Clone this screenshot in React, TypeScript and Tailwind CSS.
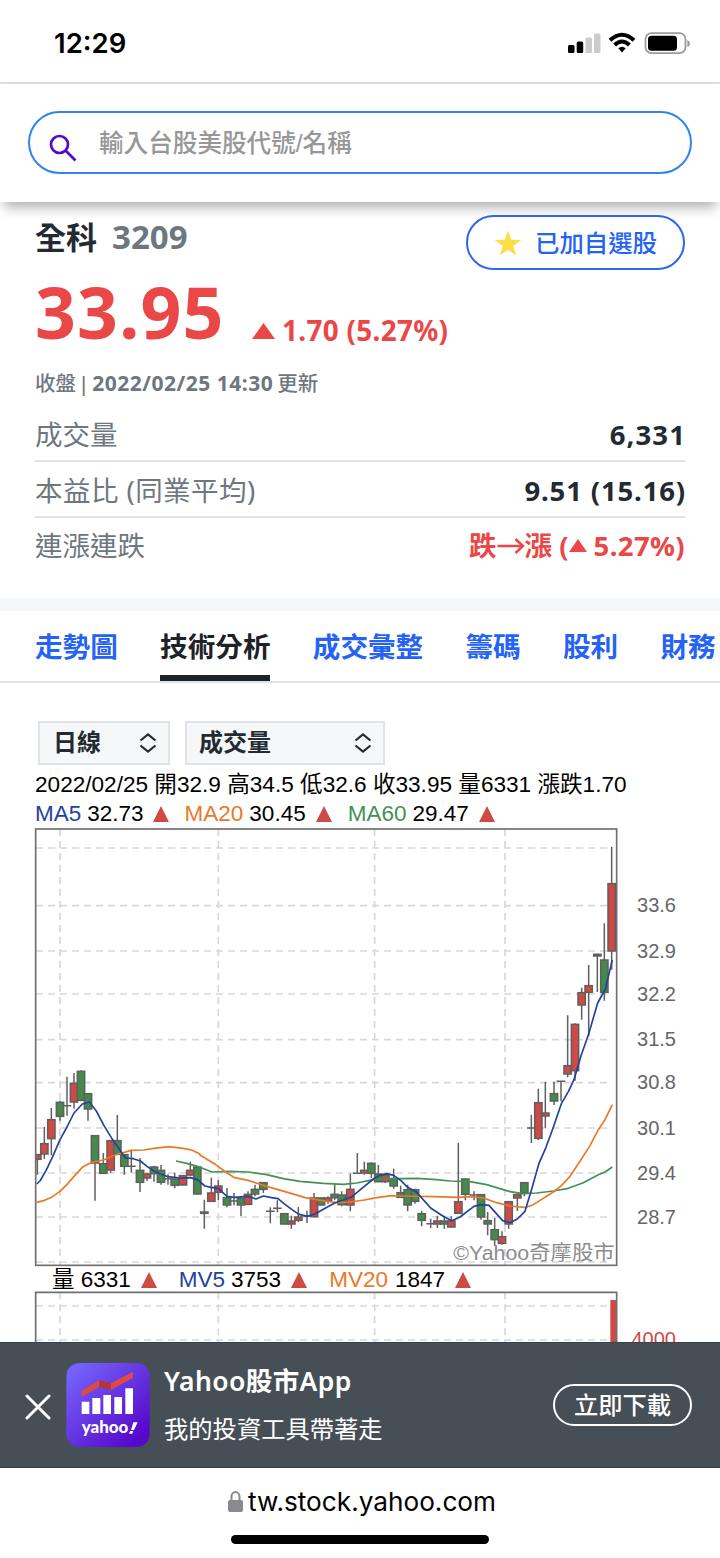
import type { ReactNode } from "react";

type Kind = "up" | "down" | "flat";
// x, high, low, body top, body bottom, kind
type Candle = [number, number, number, number, number, Kind];
type Point = [number, number];

// The chart is drawn at three units to the pixel.
const shiftCandles = (dx: number, dy: number, list: Candle[]): Candle[] =>
  list.map(([x, h, l, t, b, k]) => [x + dx, h + dy, l + dy, t + dy, b + dy, k]);
const shiftPoints = (dx: number, dy: number, list: Point[]): Point[] =>
  list.map(([x, y]) => [x + dx, y + dy]);

const candles: Candle[] = [
  ...shiftCandles(60, 660, [
    [52, 343, 405, 344, 359, "up"],
    [73, 262, 357, 311, 343, "up"],
    [94, 205, 347, 239, 297, "up"],
    [120, 183, 243, 187, 230, "down"],
    [141, 111, 228, 198, 198, "flat"],
    [162, 100, 207, 130, 187, "up"],
    [183, 92, 185, 94, 182, "down"],
    [204, 160, 243, 161, 208, "down"],
    [225, 286, 483, 287, 370, "down"],
    [250, 340, 403, 371, 401, "down"],
    [272, 301, 399, 302, 391, "up"],
    [292, 226, 345, 302, 344, "down"],
    [313, 343, 405, 344, 380, "down"],
    [334, 330, 399, 380, 380, "flat"],
    [360, 355, 457, 391, 428, "down"],
    [381, 399, 424, 402, 415, "up"],
    [402, 378, 426, 381, 402, "down"],
    [423, 376, 435, 391, 428, "down"],
    [444, 404, 435, 417, 417, "flat"],
    [464, 399, 446, 417, 437, "down"],
    [489, 406, 437, 407, 436, "up"],
    [511, 366, 410, 391, 406, "up"],
    [532, 380, 464, 381, 463, "down"],
    [553, 480, 567, 516, 521, "flat"],
    [574, 414, 487, 459, 485, "up"],
    [595, 422, 482, 438, 458, "up"],
  ]),
  ...shiftCandles(600, 660, [
    [81, 445, 503, 473, 496, "down"],
    [102, 460, 497, 484, 484, "flat"],
    [123, 473, 529, 475, 496, "down"],
    [144, 455, 497, 463, 494, "up"],
    [165, 435, 470, 448, 463, "down"],
    [190, 427, 460, 428, 449, "down"],
    [211, 503, 551, 515, 515, "flat"],
    [232, 482, 518, 506, 506, "flat"],
    [253, 520, 554, 521, 553, "down"],
    [274, 528, 567, 543, 553, "up"],
    [295, 502, 547, 531, 542, "up"],
    [321, 513, 550, 528, 528, "flat"],
    [342, 460, 533, 474, 531, "up"],
    [363, 473, 497, 474, 496, "down"],
    [384, 470, 492, 474, 484, "up"],
    [404, 434, 482, 463, 474, "down"],
    [425, 455, 500, 465, 495, "down"],
    [451, 402, 515, 448, 496, "up"],
    [472, 340, 401, 401, 401, "flat"],
    [493, 366, 405, 391, 400, "up"],
    [514, 368, 415, 370, 401, "down"],
    [535, 376, 428, 402, 426, "down"],
    [556, 400, 430, 405, 426, "up"],
    [581, 387, 447, 416, 439, "down"],
    [602, 438, 475, 458, 473, "down"],
  ]),
  ...shiftCandles(1200, 660, [
    [23, 435, 515, 449, 496, "down"],
    [45, 447, 492, 449, 485, "down"],
    [65, 513, 560, 521, 542, "down"],
    [92, 537, 565, 552, 552, "flat"],
    [112, 528, 565, 543, 553, "up"],
    [133, 528, 567, 543, 553, "down"],
    [154, 530, 563, 543, 562, "up"],
    [175, 309, 523, 485, 521, "up"],
    [196, 416, 482, 417, 464, "down"],
    [222, 455, 482, 466, 466, "flat"],
    [243, 463, 540, 464, 532, "down"],
    [263, 517, 587, 542, 553, "down"],
    [284, 535, 618, 569, 600, "down"],
    [306, 575, 615, 590, 611, "up"],
    [326, 484, 567, 485, 553, "up"],
    [352, 459, 514, 464, 475, "up"],
    [373, 427, 470, 428, 459, "down"],
    [394, 225, 310, 265, 265, "flat"],
  ]),
  ...shiftCandles(1560, 540, [
    [55, 267, 421, 308, 416, "up"],
    [76, 246, 384, 339, 349, "up"],
    [102, 246, 316, 281, 304, "down"],
    [123, 245, 305, 245, 245, "flat"],
    [143, 47, 233, 197, 223, "up"],
    [165, 71, 243, 73, 213, "up"],
  ]),
  ...shiftCandles(1500, 0, [
    [245, 504, 600, 518, 556, "up"],
    [266, 436, 650, 497, 518, "up"],
    [292, 402, 517, 403, 409, "flat"],
    [313, 311, 543, 420, 518, "down"],
    [335, 82, 450, 191, 394, "up"],
  ]),
];

const ma5: Point[] = [
  ...shiftPoints(60, 660, [[50, 433], [60, 424], [78, 393], [98, 351], [120, 300], [141, 262], [162, 220], [187, 193], [208, 187], [229, 214], [252, 258], [274, 294], [292, 320], [316, 355], [340, 357], [361, 364], [381, 380], [402, 394], [423, 404], [444, 411], [480, 415], [511, 414], [532, 420], [555, 439], [574, 443]]),
  ...shiftPoints(600, 660, [[55, 447], [81, 470], [102, 473], [144, 470], [168, 478], [190, 469], [215, 474], [234, 477], [255, 494], [276, 510], [297, 524], [322, 530], [345, 523], [366, 511], [404, 490], [453, 473], [493, 440], [520, 418], [540, 407], [560, 402], [581, 407], [602, 422]]),
  ...shiftPoints(1200, 660, [[23, 443], [50, 458], [92, 505], [133, 532], [156, 543], [180, 532], [222, 500], [243, 495], [267, 497], [308, 543], [330, 549], [352, 538]]),
  ...shiftPoints(1560, 540, [[15, 635], [36, 565], [57, 491], [78, 443], [100, 383], [124, 312], [145, 276]]),
  ...shiftPoints(1500, 0, [[222, 780], [243, 708], [266, 643], [293, 550], [316, 508], [325, 470], [337, 421]]),
];
const ma20: Point[] = [
  ...shiftPoints(60, 660, [[50, 488], [74, 482], [98, 471], [120, 455], [141, 434], [162, 410], [187, 383], [212, 369], [250, 361], [285, 346], [334, 332], [371, 331], [402, 326], [447, 321], [489, 326], [515, 331], [540, 343]]),
  ...shiftPoints(600, 660, [[0, 346], [43, 372], [81, 400], [104, 414], [144, 422], [200, 440], [255, 456], [316, 474], [363, 482], [410, 489], [451, 487], [493, 481], [530, 474], [575, 468]]),
  ...shiftPoints(1200, 660, [[0, 469], [100, 471], [175, 473], [215, 471], [250, 475], [290, 489], [330, 499], [373, 503]]),
  ...shiftPoints(1560, 540, [[20, 622], [40, 615], [100, 577], [124, 558], [150, 530], [180, 485], [210, 438], [235, 390], [255, 360], [277, 315]]),
];
const ma60: Point[] = [
  ...shiftPoints(60, 660, [[468, 364], [500, 371], [532, 380], [576, 397]]),
  ...shiftPoints(600, 660, [[37, 397], [90, 395], [144, 397], [200, 405], [250, 417], [300, 425], [370, 431], [430, 434], [470, 430], [520, 420], [560, 417]]),
  ...shiftPoints(1200, 660, [[0, 417], [50, 416], [110, 420], [150, 424], [210, 426], [260, 435], [330, 456]]),
  ...shiftPoints(1560, 540, [[10, 582], [50, 580], [100, 574], [145, 566], [190, 549], [235, 525], [255, 517], [277, 502]]),
];

const toPath = (pts: Point[]) => pts.map(([x, y]) => `${x},${y}`).join(" ");
const fills: Record<Kind, string> = { up: "#d04a45", down: "#438a4b", flat: "#5f5f5f" };
const gridX = [180, 655, 1124, 1515];
const gridY = [85, 258, 394, 523, 660, 789, 925, 1060, 1192, 1327];
const axis: [string, number][] = [
  ["33.6", 258], ["32.9", 394], ["32.2", 523], ["31.5", 660],
  ["30.8", 789], ["30.1", 925], ["29.4", 1060], ["28.7", 1192],
];

function PriceChart() {
  return (
    <svg className="block h-[447px] w-[720px] shrink-0" viewBox="0 1 2160 1341">
      <g stroke="#d8d8d8" strokeWidth="5" strokeDasharray="21 15">
        {gridX.map((x) => <line key={x} x1={x} x2={x} y1="28" y2="1337" />)}
        {gridY.map((y) => <line key={y} x1="108" x2="1836" y1={y} y2={y} />)}
      </g>
      <text x="1360" y="1320" fontSize="61" fill="#8c8c8c" textLength="484" lengthAdjust="spacingAndGlyphs">©Yahoo奇摩股市</text>
      <clipPath id="plot"><rect x="107" y="20" width="1746" height="1320" /></clipPath>
      <g clipPath="url(#plot)" stroke="#5f5f5f" strokeWidth="4.5">
        {candles.map(([x, h, l, t, b, k]) => (
          <g key={x}>
            <line x1={x} x2={x} y1={h} y2={l} />
            {t === b
              ? <line x1={x - 13} x2={x + 13} y1={t} y2={t} />
              : <rect x={x - 11} y={t + 1} width="22" height={b - t - 1} fill={fills[k]} />}
          </g>
        ))}
      </g>
      <g fill="none" strokeWidth="5" strokeLinejoin="round">
        <polyline points={toPath(ma60)} stroke="#459153" />
        <polyline points={toPath(ma20)} stroke="#e87929" />
        <polyline points={toPath(ma5)} stroke="#22439c" />
      </g>
      <rect x="107" y="28" width="1743" height="1309" fill="none" stroke="#707070" strokeWidth="5" />
      {axis.map(([label, y]) => (
        <text key={label} x="2028" y={y + 20} fontSize="60" fill="#666" textAnchor="end">{label}</text>
      ))}
    </svg>
  );
}

function VolumeChart() {
  return (
    <svg className="block h-[52px] w-[720px] shrink-0" viewBox="0 1 2160 156">
      <g stroke="#d8d8d8" strokeWidth="5">
        {gridX.map((x) => <line key={x} x1={x} x2={x} y1="8" y2="157" strokeDasharray="21 15" />)}
        <line x1="108" x2="1836" y1="49" y2="49" strokeDasharray="21 15" />
        <line x1="108" x2="1836" y1="151" y2="151" strokeDasharray="21 15" />
      </g>
      <rect x="1831" y="31" width="18" height="130" fill="#d04a45" />
      <path d="M107 160V8H1850V160" fill="none" stroke="#707070" strokeWidth="5" />
      <text x="2028" y="170" fontSize="60" fill="#d04a45" textAnchor="end">4000</text>
    </svg>
  );
}

function Triangle({ className }: { className: string }) {
  return (
    <svg viewBox="0 0 10 10" preserveAspectRatio="none" className={className}>
      <path d="M5 0L10 10H0Z" fill="currentColor" />
    </svg>
  );
}

function Metric({ label, last, tone, children }: { label: string; last?: boolean; tone: string; children: ReactNode }) {
  return (
    <div className={`flex h-14 items-center justify-between text-[27.5px] ${last ? "" : "border-b-2 border-[#e0e4e9] pt-[3px]"}`}>
      <span className={label.includes("(") ? "tracking-[0.450px] text-[#6e7780]" : "text-[#6e7780]"}>{label}</span>
      <span className={`flex items-center font-bold ${tone}`}>{children}</span>
    </div>
  );
}

function Select({ label, className }: { label: string; className: string }) {
  return (
    <div className={`flex h-11 items-center justify-between border-2 border-[#e0e4e9] bg-[#f5f7f9] pr-[11px] font-bold text-[#232a31] ${className}`}>
      <span>{label}</span>
      <svg viewBox="0 0 18 20" className="h-5 w-[18px]" fill="none" stroke="#232a31" strokeWidth="2.2">
        <path d="M1.5 7.5L9 1.5L16.500 7.5M1.500 12.500L9 18.500L16.500 12.500" />
      </svg>
    </div>
  );
}

const tabs = ["走勢圖", "技術分析", "成交彙整", "籌碼", "股利", "財務"];

export default function App() {
  return (
    <div className="flex h-[1558px] w-[720px] flex-col overflow-hidden bg-white font-['Noto_Sans','Noto_Sans_CJK_TC',sans-serif]">
      <div className="flex h-[84px] shrink-0 items-start justify-between border-b-2 border-[#dedede] pr-[29px] pl-[54px] pt-[26px]">
        <span className="font-['Inter',sans-serif] text-[27.500px] leading-[34px] font-semibold text-black">12:29</span>
        <svg viewBox="0 0 124 24" className="mt-[6px] h-6 w-[124px]">
          <rect x="1" y="13" width="6.500" height="8" rx="1.500" />
          <rect x="9.700" y="9.500" width="6.500" height="11.500" rx="1.500" />
          <rect x="18.500" y="5.500" width="6.500" height="15.500" rx="1.500" fill="#ccc" />
          <rect x="27" y="1.500" width="6.500" height="19.500" rx="1.500" fill="#ccc" />
          <g fill="none" stroke="#000" strokeWidth="4">
            <path d="M43 8.300Q55 -2.800 67 8.300" />
            <path d="M47.600 13Q55 6 62.400 13" />
          </g>
          <path d="M51.300 16.300Q55 13.300 58.700 16.300L55 20.500Z" />
          <rect x="78.500" y="1.200" width="40" height="20" rx="6" fill="none" stroke="#9b9b9b" strokeWidth="1.800" />
          <rect x="81" y="3.700" width="29" height="15" rx="3.500" />
          <path d="M120.300 8v7q2.700-1 2.700-3.500t-2.700-3.500z" fill="#9b9b9b" />
        </svg>
      </div>

      <header className="relative z-10 flex h-[118px] shrink-0 items-start px-7 pt-[27px] shadow-[0_9px_12px_-4px_rgba(0,0,0,0.32)]">
        <div className="flex h-[63px] w-full items-center rounded-full border-2 border-[#3383ee] pl-[19px] text-[24.600px] font-medium text-[#979797]">
          <svg viewBox="0 0 28 28" className="mt-[10px] mr-[22px] h-7 w-7 shrink-0" fill="none" stroke="#5409cb" strokeWidth="2.700">
            <circle cx="10.500" cy="10.500" r="8.500" />
            <path d="M16.800 16.800L26.500 26.500" />
          </svg>
          <span className="pt-1 font-['Liberation_Sans','Noto_Sans_CJK_TC',sans-serif]">輸入台股美股代號/名稱</span>
        </div>
      </header>

      <main className="flex h-[396px] shrink-0 flex-col px-[35px]">
        <div className="flex h-[69px] shrink-0 items-start justify-between pt-[13px]">
          <h1 className="flex items-center gap-[15px] text-[31px] leading-[44px] font-bold">
            <span className="-mt-px text-[#232a31]">全科</span>
            <span className="text-[33px] text-[#6e7780]">3209</span>
          </h1>
          <button className="flex h-[55px] w-[219px] items-center rounded-full border-2 border-[#2e69ec] pl-[26px] text-[24.400px] font-medium text-[#2563f4]">
            <svg viewBox="0 0 28 26" className="mr-[13px] h-[26px] w-7"><path d="M14 0.500L17.200 9.800L27.300 10L19.200 16L22.200 25.500L14 19.700L5.800 25.500L8.800 16L0.700 10L10.800 9.800Z" fill="#fddc45" /></svg>
            <span className="pt-[2px]">已加自選股</span>
          </button>
        </div>
        <div className="flex h-[86px] shrink-0 items-end text-[#ea4747]">
          <span className="mb-[2px] w-[217px] text-[71.500px] leading-[86px] font-bold tracking-[1.200px]">33.95</span>
          <span className="flex h-[53px] items-center gap-[7px] text-[27.800px] font-bold tracking-[0.350px]">
            <Triangle className="h-4 w-[23px]" />
            1.70 (5.27%)
          </span>
        </div>
        <p className="flex h-[49px] shrink-0 pt-[10px] text-[20.500px] leading-[32px] font-medium text-[#6e7780]">
          <span>收盤</span>
          <span className="pr-[3px] pl-[2px]">|</span>
          <span className="text-[21px] font-bold tracking-[0.500px]">2022/02/25 14:30</span>
          <span className="pl-1">更新</span>
        </p>
        <Metric label="成交量" tone="text-[#232a31] tracking-[1.100px] -mr-px">6,331</Metric>
        <Metric label="本益比 (同業平均)" tone="text-[#232a31] tracking-[0.850px] -mr-px">9.51 (15.16)</Metric>
        <Metric label="連漲連跌" tone="text-[#ea4747]" last>
          <span>跌</span>
          <svg viewBox="0 0 28 18" className="h-[18px] w-7" fill="none" stroke="currentColor" strokeWidth="2.400"><path d="M0.500 9H26M18.500 2L26 9L18.500 16" /></svg>
          <span>漲 (</span>
          <Triangle className="mb-px h-[13px] w-[18px]" />
          <span className="pl-[7px] tracking-[0.400px]">5.27%)</span>
        </Metric>
      </main>

      <div className="h-[13px] shrink-0 bg-[#f5f7f9]" />

      <nav className="flex h-[72px] shrink-0 gap-[42.300px] overflow-hidden border-b-2 border-[#e0e4e9] pl-[35px] text-[27.600px] font-bold whitespace-nowrap text-[#2563f4]">
        {tabs.map((tab) => (
          <a key={tab} className={tab === "技術分析" ? "h-[70px] border-b-6 border-[#1d2228] leading-[71px] text-[#1d2228]" : "h-[70px] leading-[71px]"}>{tab}</a>
        ))}
      </nav>

      <section className="flex h-[659px] shrink-0 flex-col overflow-hidden font-['Liberation_Sans','Noto_Sans_CJK_TC',sans-serif] text-black">
        <div className="flex shrink-0 gap-[15px] pt-[38px] pl-[38px]">
          <Select label="日線" className="w-[132px] pl-[13px] text-[24px]" />
          <Select label="成交量" className="w-[200px] pl-3 text-[24px]" />
        </div>
        <p className="mt-[5px] h-[33px] shrink-0 pl-[35px] text-[22.600px] leading-[30px] whitespace-nowrap">2022/02/25 開32.9 高34.5 低32.6 收33.95 量6331 漲跌1.70</p>
        <p className="flex h-[21px] shrink-0 items-center pl-[35px] text-[22.500px] leading-[21px] whitespace-nowrap">
          <span className="text-[#22439c]">MA5</span>
          <span className="pl-[6px]">32.73</span>
          <Triangle className="mr-4 ml-[9px] h-4 w-4 text-[#d04a45]" />
          <span className="text-[#e87929]">MA20</span>
          <span className="pl-[6px]">30.45</span>
          <Triangle className="mr-4 ml-[10px] h-4 w-4 text-[#d04a45]" />
          <span className="text-[#459153]">MA60</span>
          <span className="pl-[6px]">29.47</span>
          <Triangle className="ml-[10px] h-4 w-4 text-[#d04a45]" />
        </p>
        <div className="-mt-1 flex shrink-0 flex-col"><PriceChart /></div>
        <p className="flex h-[23px] shrink-0 items-center pt-[2px] pl-[52px] text-[22.500px] leading-[23px] whitespace-nowrap">
          <span>量 6331</span>
          <Triangle className="mr-[22px] ml-[10px] h-4 w-4 text-[#d04a45]" />
          <span className="text-[#22439c]">MV5</span>
          <span className="pl-[6px]">3753</span>
          <Triangle className="mr-[22px] ml-[10px] h-4 w-4 text-[#d04a45]" />
          <span className="text-[#e87929]">MV20</span>
          <span className="pl-[7px]">1847</span>
          <Triangle className="ml-[10px] h-4 w-4 text-[#d04a45]" />
        </p>
        <VolumeChart />
      </section>

      <aside className="flex h-[126px] shrink-0 items-center border-y border-[#3b4148] bg-[#464e56] pr-7 pl-[25px] text-white">
        <svg viewBox="0 0 26 26" className="mt-[3px] h-[26px] w-[26px] shrink-0" stroke="#fff" strokeWidth="3"><path d="M2 2L24 24M24 2L2 24" strokeLinecap="round" /></svg>
        <svg viewBox="0 0 250 252" className="ml-[15px] h-[84px] w-[84px] shrink-0">
          <defs>
            <linearGradient id="tile" x1="0.100" y1="0.100" x2="0.850" y2="0.900">
              <stop offset="0" stopColor="#7460fa" />
              <stop offset="1" stopColor="#5609ca" />
            </linearGradient>
          </defs>
          <rect width="250" height="252" rx="39" fill="url(#tile)" />
          <path d="M46 83L99 52V71L46 102Z" fill="#df4b42" />
          <path d="M134 61L200 26V44L134 80Z" fill="#df4b42" />
          <path d="M99 52L134 61V80L99 71Z" fill="#b93233" />
          <path d="M46 116h23v37h-23zM78 105h24v48h-24zM111 96h23v57h-23zM144 102h23v51h-23zM177 76h23v77h-23z" fill="#fff" />
          <text x="46" y="211" fontSize="49" fontWeight="900" fill="#fff" textLength="140" lengthAdjust="spacingAndGlyphs" className="font-['Lato',sans-serif]">yahoo</text>
          <path d="M201 178H214L203 201H194ZM191 204h10l-3 8h-10z" fill="#fff" />
        </svg>
        <div className="ml-[14px] flex flex-1 flex-col">
          <span className="text-[26.500px] leading-[48px] font-semibold tracking-[0.400px]">Yahoo股市App</span>
          <span className="text-[24.300px] leading-[48px]">我的投資工具帶著走</span>
        </div>
        <button className="-mt-px h-[42px] w-[139px] rounded-full border-2 border-white text-[24.300px] leading-[38px] font-medium">立即下載</button>
      </aside>

      <footer className="flex h-[90px] shrink-0 flex-col items-center">
        <div className="flex h-[67px] items-center gap-[5px] pt-px pl-1 font-['Inter',sans-serif] text-[26.200px] text-black">
          <svg viewBox="0 0 15 22" className="-mt-px h-[22px] w-[15px]">
            <path d="M3.500 10V5.500a4 4.500 0 0 1 8 0V10" fill="none" stroke="#8a8a8e" strokeWidth="2" />
            <rect y="9" width="15" height="12" rx="2" fill="#8a8a8e" />
          </svg>
          tw.stock.yahoo.com
        </div>
        <div className="h-[9px] w-[258px] rounded-full bg-black" />
      </footer>
    </div>
  );
}
